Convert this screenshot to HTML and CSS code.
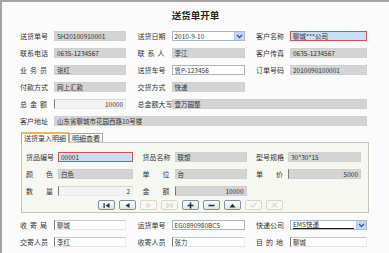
FILE: index.html
```html
<!DOCTYPE html>
<html>
<head>
  <title>送货单开单</title>
  <link rel="stylesheet" href="styles.css">
</head>
<body>
  <div class="window">
    <h1 class="title">送货单开单</h1>

    <div class="form">
      <div class="field"><span class="lbl">送货单号</span><span class="box">SH20100910001</span></div>
      <div class="field"><span class="lbl">送货日期</span>
        <span class="box select"><span class="sel">2010-9-10</span>
          <span class="drop"><svg width="7" height="5" viewBox="0 0 7 5"><path d="M1 1l2.5 2.5L6 1" fill="none" stroke="#3e5a8c" stroke-width="1.4"/></svg></span>
        </span>
      </div>
      <div class="field"><span class="lbl">客户名称</span><span class="box focus">聊城***公司</span></div>

      <div class="field"><span class="lbl">联系电话</span><span class="box">0635-1234567</span></div>
      <div class="field"><span class="lbl">联 系 人</span><span class="box">李江</span></div>
      <div class="field"><span class="lbl">客户传真</span><span class="box">0635-1234567</span></div>

      <div class="field"><span class="lbl">业 务 员</span><span class="box">张红</span></div>
      <div class="field"><span class="lbl">送货车号</span><span class="box white">鲁P-123456</span></div>
      <div class="field"><span class="lbl">订单号码</span><span class="box">2010090100001</span></div>

      <div class="field"><span class="lbl">付款方式</span><span class="box">网上汇款</span></div>
      <div class="field"><span class="lbl">交货方式</span><span class="box">快递</span></div>
      <div class="field"></div>

      <div class="field"><span class="lbl">总 金 额</span><span class="box num light">10000</span></div>
      <div class="field wide2"><span class="lbl">总金额大写</span><span class="box">壹万圆整</span></div>

      <div class="field wide3"><span class="lbl">客户地址</span><span class="box">山东省聊城市花园西路10号楼</span></div>
    </div>

    <div class="tabs">
      <span class="tab active">送货录入明细</span>
      <span class="tab">明细查看</span>
    </div>

    <div class="panel">
      <div class="form inner">
        <div class="field"><span class="lbl">货品编号</span><span class="box focus">00001</span></div>
        <div class="field"><span class="lbl">货品名称</span><span class="box">联想</span></div>
        <div class="field"><span class="lbl">型号规格</span><span class="box">30*30*15</span></div>

        <div class="field"><span class="lbl">颜 色</span><span class="box">白色</span></div>
        <div class="field"><span class="lbl">单 位</span><span class="box">台</span></div>
        <div class="field"><span class="lbl">单 价</span><span class="box num">5000</span></div>

        <div class="field"><span class="lbl">数 量</span><span class="box num light">2</span></div>
        <div class="field"><span class="lbl">金 额</span><span class="box num">10000</span></div>
        <div class="field"></div>
      </div>

      <div class="nav">
        <span class="btn"><svg width="7" height="5" viewBox="0 0 7 5"><rect x="0.5" y="0" width="1.2" height="5" fill="#1f2f55"/><path d="M6.5 0L2.5 2.5L6.5 5z" fill="#1f2f55"/></svg></span>
        <span class="btn"><svg width="7" height="5" viewBox="0 0 7 5"><path d="M5.5 0L1.5 2.5L5.5 5z" fill="#1f2f55"/></svg></span>
        <span class="btn off"><svg width="7" height="5" viewBox="0 0 7 5"><path d="M2 0.5L5.5 2.5L2 4.5z" fill="none" stroke="#c9cbbf" stroke-width="0.8"/></svg></span>
        <span class="btn off"><svg width="7" height="5" viewBox="0 0 7 5"><path d="M1 0.5L4.5 2.5L1 4.5z" fill="none" stroke="#c9cbbf" stroke-width="0.8"/><rect x="5.3" y="0" width="1" height="5" fill="#c9cbbf"/></svg></span>
        <span class="btn"><svg width="7" height="7" viewBox="0 0 7 7"><path d="M3.5 0.5v6M0.5 3.5h6" stroke="#1f2f55" stroke-width="1.6"/></svg></span>
        <span class="btn"><svg width="7" height="5" viewBox="0 0 7 5"><path d="M0.5 2.5h6" stroke="#1f2f55" stroke-width="1.6"/></svg></span>
        <span class="btn"><svg width="7" height="5" viewBox="0 0 7 5"><path d="M0.5 4.5L3.5 0.8L6.5 4.5z" fill="#1f2f55"/></svg></span>
        <span class="btn off"><svg width="7" height="6" viewBox="0 0 7 6"><path d="M0.5 3.5L2.5 5L6.5 0.5" fill="none" stroke="#c9cbbf" stroke-width="1"/></svg></span>
        <span class="btn off"><svg width="7" height="6" viewBox="0 0 7 6"><path d="M1 0.5L6 5.5M6 0.5L1 5.5" fill="none" stroke="#c9cbbf" stroke-width="1"/></svg></span>
      </div>
    </div>

    <div class="form bottom">
      <div class="field"><span class="lbl">收 寄 局</span><span class="box sunk">聊城</span></div>
      <div class="field"><span class="lbl">运货单号</span><span class="box white">EG0890980BCS</span></div>
      <div class="field"><span class="lbl">快递公司</span>
        <span class="box select"><span class="sel picked">EMS快递</span>
          <span class="drop"><svg width="7" height="5" viewBox="0 0 7 5"><path d="M1 1l2.5 2.5L6 1" fill="none" stroke="#3e5a8c" stroke-width="1.4"/></svg></span>
        </span>
      </div>

      <div class="field"><span class="lbl">交寄人员</span><span class="box sunk">李红</span></div>
      <div class="field"><span class="lbl">收寄人员</span><span class="box sunk">张力</span></div>
      <div class="field"><span class="lbl">目 的 地</span><span class="box sunk">聊城</span></div>
    </div>
  </div>
</body>
</html>
```

FILE: styles.css
```css
/* 送货单开单 window */
body {
  margin: 0;
  background: #fff;
  font-family: "Noto Sans CJK SC", "Liberation Sans", sans-serif;
  font-size: 7px;
  color: #333;
}

.window {
  box-sizing: border-box;
  width: 389px;
  height: 253px;
  padding-top: 7px;
  border-top: 2px solid #a4a4a4;
  border-left: 2px solid #a4a4a4;
  background: #fbfbfb;
}

.title {
  margin: 0 0 10px;
  font-size: 9.5px;
  line-height: 12px;
  font-weight: bold;
  text-align: center;
  color: #222;
}

/* three label + box columns */
.form {
  display: grid;
  grid-template-columns: 106px 107px 111px;
  column-gap: 11.5px;
  row-gap: 7px;
  padding-left: 18px;
}

.field {
  display: grid;
  grid-template-columns: 34px 1fr;
  height: 10px;
  align-items: center;
}

.wide2 { grid-column: span 2; }
.wide3 { grid-column: span 3; }

.lbl {
  width: 27px;
  white-space: nowrap;
  text-align: justify;
  text-align-last: justify;
  line-height: 10px;
}

.box {
  box-sizing: border-box;
  height: 10px;
  line-height: 8px;
  padding: 0 2px;
  background: #d4d4d4;
  border: 1px solid #d0d0d0;
  white-space: nowrap;
  overflow: hidden;
  font-size: 6.5px;
}

.box.white {
  background: #fff;
  border-color: #b0b4ba;
}

.box.sunk {
  background: #fff;
  border-color: #c8c8c8 #ececec #e4e4e4 #7a7a7a;
}

.box.focus {
  background: #c8def6;
  border-color: #c95454;
}

.box.num {
  text-align: right;
  border-left-color: #7a7a7a;
}

.box.light {
  background: #f2f2f2;
  border-color: #d8d8d8 #eaeaea #eaeaea #7a7a7a;
}

.box.select {
  display: flex;
  align-items: center;
  padding: 0 0 0 2px;
  background: #fff;
  border-color: #a9b8cc;
}

.sel {
  flex: 1;
  height: 7px;
  line-height: 7px;
}

.sel.picked {
  margin-right: 2px;
  border-bottom: 1px solid #1c1c1c;
}

.drop {
  display: flex;
  align-items: center;
  justify-content: center;
  width: 9px;
  height: 8px;
  background: #c4d5f8;
  border-left: 1px solid #b3c6ec;
}

/* tab strip */
.tabs {
  display: flex;
  align-items: flex-end;
  height: 10px;
  margin: 6px 0 0 19px;
}

.tab {
  box-sizing: border-box;
  height: 9px;
  line-height: 8px;
  padding: 0 2px;
  border: 1px solid #a8aca0;
  border-bottom: none;
  background: linear-gradient(#fff, #ecebe4);
}

.tab.active {
  height: 11px;
  margin-bottom: -1px;
  border-top: 2px solid #f2b84a;
  background: #fcfcfa;
  position: relative;
  z-index: 1;
}

.panel {
  box-sizing: border-box;
  width: 348px;
  height: 71px;
  margin-left: 19px;
  padding-top: 9px;
  border: 1px solid #c4c6b8;
  background: #f7f7f2;
}

.form.inner {
  grid-template-columns: 107px 104px 105px;
  column-gap: 9.5px;
  padding-left: 4px;
}

.form.inner .field {
  grid-template-columns: 32px 1fr;
}

.nav {
  display: flex;
  justify-content: center;
  gap: 4px;
  margin-top: 4px;
  padding-right: 9px;
}

.btn {
  box-sizing: border-box;
  display: flex;
  align-items: center;
  justify-content: center;
  width: 17px;
  height: 10px;
  border: 1px solid #7d92ad;
  border-radius: 2px;
  background: linear-gradient(#fff, #e4e4dd);
}

.btn.off {
  border-color: #d6d8cc;
  background: #f8f8f3;
}

.form.bottom {
  margin-top: 7px;
}
```
